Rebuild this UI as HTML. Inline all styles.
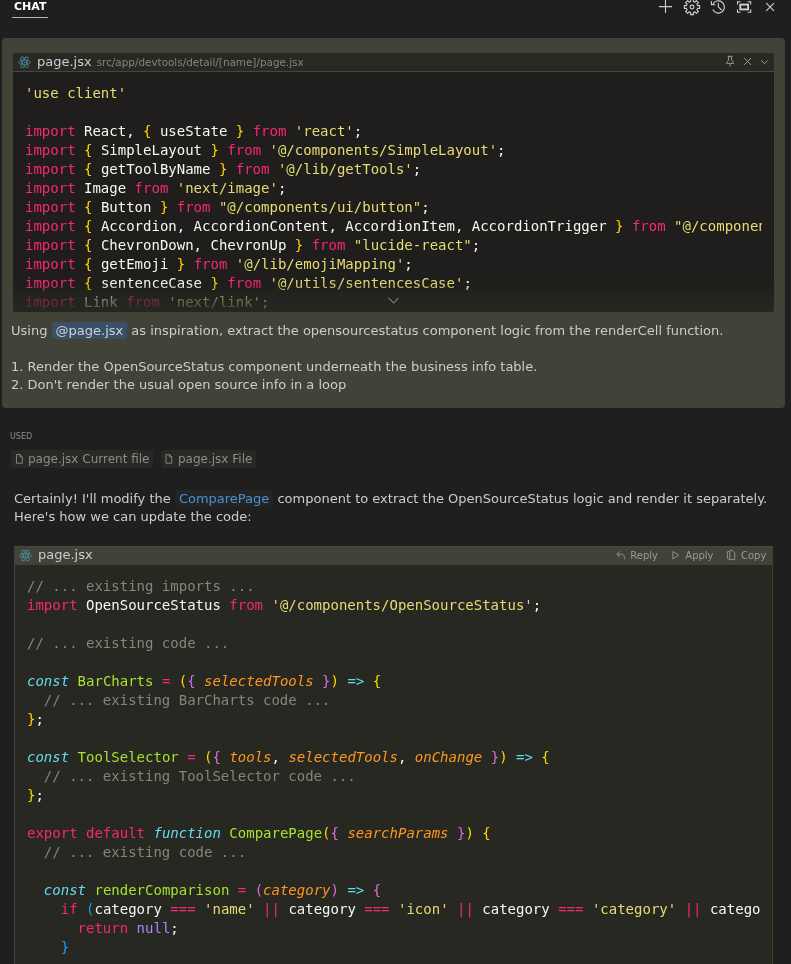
<!DOCTYPE html>
<html><head><meta charset="utf-8">
<style>
html,body{margin:0;padding:0;background:#1f1f1f;}
body{width:791px;height:964px;position:relative;overflow:hidden;font-family:"DejaVu Sans","Liberation Sans",sans-serif;font-size:13px;color:#cccccc;}
.abs{position:absolute;}
.ga{will-change:transform}
.mono{font-family:"DejaVu Sans Mono","Liberation Mono",monospace;font-size:14px;line-height:19px;white-space:pre;}
.k{color:#f92672}.s{color:#e6db74}.w{color:#f8f8f2}.b1{color:#ffd700}.b2{color:#da70d6}.b3{color:#179fff}
.c{color:#87857a}.fn{color:#a6e22e}.kw{color:#66d9ef;font-style:italic}.ar{color:#66d9ef}.p{color:#fd971f;font-style:italic}.n{color:#ae81ff}
.title{left:14px;top:0px;font-size:11px;font-weight:bold;color:#ffffff;line-height:13px;}
.tline{left:12px;top:17px;width:36px;height:1px;background:#b4b4b4;}
.card{left:2px;top:38px;width:783px;height:370px;background:#414339;border-radius:4px;}
.cb1{left:13px;top:53px;width:761px;height:259px;background:#1f1e1c;border-radius:3px;overflow:hidden;}
.cb1h{left:0;top:0;width:761px;height:18px;background:#292924;border-bottom:1px solid #45463f;}
.cb1c{left:0;top:19px;width:749px;height:240px;overflow:hidden;}
.fade{left:0;top:229px;width:761px;height:30px;background:linear-gradient(to bottom,rgba(39,40,34,0) 0%,rgba(39,40,34,.64) 66%,rgba(39,40,34,.85) 100%);}
.cb2{left:14px;top:546px;width:757px;height:430px;background:#272822;border:1px solid #414339;border-top-color:#464643;overflow:hidden;}
.cb2h{left:0;top:0;width:757px;height:18px;background:#414339;}
.cb2c{left:0;top:19px;width:746px;height:420px;overflow:hidden;}
.txt{line-height:18px;white-space:pre;}
.chip{height:18px;top:450px;background:#282825;border-radius:3px;color:#8c8c8c;font-size:12px;line-height:19px;white-space:pre;}
.act{top:1px;line-height:16px;font-size:10px;color:#9a9a90;}
</style></head><body>
<div class="abs ga" style="left:0;top:0;width:791px;height:964px">
<div class="abs title">CHAT</div>
<div class="abs tline"></div>

<div class="abs card"></div>
<div class="abs cb1">
  <div class="abs cb1h"></div>
  <div class="abs" style="left:24px;top:1px;line-height:16px;font-size:13px;color:#cccccc;white-space:pre">page.jsx</div>
  <div class="abs" style="left:83.7px;top:1px;line-height:16px;font-size:10.4px;color:#85857e;white-space:pre">src/app/devtools/detail/[name]/page.jsx</div>
  <div class="abs cb1c"><div class="abs mono" style="left:12px;top:12px;"><span class="s">'use client'</span>

<span class="k">import</span> <span class="w">React, </span><span class="b1">{</span><span class="w"> useState </span><span class="b1">}</span> <span class="k">from</span> <span class="s">'react'</span><span class="w">;</span>
<span class="k">import</span> <span class="b1">{</span><span class="w"> SimpleLayout </span><span class="b1">}</span> <span class="k">from</span> <span class="s">'@/components/SimpleLayout'</span><span class="w">;</span>
<span class="k">import</span> <span class="b1">{</span><span class="w"> getToolByName </span><span class="b1">}</span> <span class="k">from</span> <span class="s">'@/lib/getTools'</span><span class="w">;</span>
<span class="k">import</span> <span class="w">Image</span> <span class="k">from</span> <span class="s">'next/image'</span><span class="w">;</span>
<span class="k">import</span> <span class="b1">{</span><span class="w"> Button </span><span class="b1">}</span> <span class="k">from</span> <span class="s">"@/components/ui/button"</span><span class="w">;</span>
<span class="k">import</span> <span class="b1">{</span><span class="w"> Accordion, AccordionContent, AccordionItem, AccordionTrigger </span><span class="b1">}</span> <span class="k">from</span> <span class="s">"@/components/ui/accordion"</span><span class="w">;</span>
<span class="k">import</span> <span class="b1">{</span><span class="w"> ChevronDown, ChevronUp </span><span class="b1">}</span> <span class="k">from</span> <span class="s">"lucide-react"</span><span class="w">;</span>
<span class="k">import</span> <span class="b1">{</span><span class="w"> getEmoji </span><span class="b1">}</span> <span class="k">from</span> <span class="s">'@/lib/emojiMapping'</span><span class="w">;</span>
<span class="k">import</span> <span class="b1">{</span><span class="w"> sentenceCase </span><span class="b1">}</span> <span class="k">from</span> <span class="s">'@/utils/sentencesCase'</span><span class="w">;</span>
<span class="k">import</span> <span class="w">Link</span> <span class="k">from</span> <span class="s">'next/link'</span><span class="w">;</span></div></div>
  <div class="abs fade"></div>
</div>

<div class="abs txt" style="left:11px;top:322px;">Using <span style="background:#3a5066;color:#c9d3dc;padding:1px 4px;border-radius:3px">@page.jsx</span> as inspiration, extract the opensourcestatus component logic from the renderCell function.

1. Render the OpenSourceStatus component underneath the business info table.
2. Don't render the usual open source info in a loop</div>

<div class="abs" style="left:10px;top:432px;font-size:8px;color:#8b8b8b;line-height:10px;">USED</div>
<div class="abs chip" style="left:11px;width:142px;"><span style="margin-left:17px">page.jsx Current file</span></div>
<div class="abs chip" style="left:161px;width:95px;"><span style="margin-left:17px">page.jsx File</span></div>

<div class="abs txt" style="left:14px;top:490px;line-height:18px;">Certainly! I'll modify the <span style="background:#242424;color:#4a90d6;padding:1px 4px;border-radius:3px">ComparePage</span> component to extract the OpenSourceStatus logic and render it separately.
Here's how we can update the code:</div>

<div class="abs cb2">
  <div class="abs cb2h"></div>
  <div class="abs" style="left:23px;top:0px;line-height:16px;font-size:13px;color:#cccccc">page.jsx</div>
  <div class="abs act" style="left:615.3px;">Reply</div>
  <div class="abs act" style="left:670.3px;">Apply</div>
  <div class="abs act" style="left:726px;">Copy</div>
  <div class="abs cb2c"><div class="abs mono" style="left:12px;top:11px;"><span class="c">// ... existing imports ...</span>
<span class="k">import</span> <span class="w">OpenSourceStatus</span> <span class="k">from</span> <span class="s">'@/components/OpenSourceStatus'</span><span class="w">;</span>

<span class="c">// ... existing code ...</span>

<span class="kw">const</span> <span class="fn">BarCharts</span> <span class="k">=</span> <span class="b1">(</span><span class="b2">{</span> <span class="p">selectedTools</span> <span class="b2">}</span><span class="b1">)</span> <span class="ar">=&gt;</span> <span class="b1">{</span>
<span class="c">  // ... existing BarCharts code ...</span>
<span class="b1">}</span><span class="w">;</span>

<span class="kw">const</span> <span class="fn">ToolSelector</span> <span class="k">=</span> <span class="b1">(</span><span class="b2">{</span> <span class="p">tools</span><span class="w">, </span><span class="p">selectedTools</span><span class="w">, </span><span class="p">onChange</span> <span class="b2">}</span><span class="b1">)</span> <span class="ar">=&gt;</span> <span class="b1">{</span>
<span class="c">  // ... existing ToolSelector code ...</span>
<span class="b1">}</span><span class="w">;</span>

<span class="k">export</span> <span class="k">default</span> <span class="kw">function</span> <span class="fn">ComparePage</span><span class="b1">(</span><span class="b2">{</span> <span class="p">searchParams</span> <span class="b2">}</span><span class="b1">)</span> <span class="b1">{</span>
<span class="c">  // ... existing code ...</span>

  <span class="kw">const</span> <span class="fn">renderComparison</span> <span class="k">=</span> <span class="b2">(</span><span class="p">category</span><span class="b2">)</span> <span class="ar">=&gt;</span> <span class="b2">{</span>
    <span class="k">if</span> <span class="b3">(</span><span class="w">category</span> <span class="k">===</span> <span class="s">'name'</span> <span class="k">||</span> <span class="w">category</span> <span class="k">===</span> <span class="s">'icon'</span> <span class="k">||</span> <span class="w">category</span> <span class="k">===</span> <span class="s">'category'</span> <span class="k">||</span> <span class="w">category</span> <span class="k">===</span> <span class="s">'description'</span><span class="b3">)</span> <span class="b3">{</span>
      <span class="k">return</span> <span class="n">null</span><span class="w">;</span>
    <span class="b3">}</span></div></div>
</div>
<svg class="abs" style="left:0;top:0;pointer-events:none" width="791" height="964" viewBox="0 0 791 964">
<g fill="none" stroke="#cfcfcf" stroke-width="1.1">
<path d="M659 6.6H672M665.5 0V13"/>
<path d="M690.63 1.47 L690.54 -0.66 L693.46 -0.66 L693.37 1.47 L694.94 2.12 L696.38 0.55 L698.45 2.62 L696.88 4.06 L697.53 5.63 L699.66 5.54 L699.66 8.46 L697.53 8.37 L696.88 9.94 L698.45 11.38 L696.38 13.45 L694.94 11.88 L693.37 12.53 L693.46 14.66 L690.54 14.66 L690.63 12.53 L689.06 11.88 L687.62 13.45 L685.55 11.38 L687.12 9.94 L686.47 8.37 L684.34 8.46 L684.34 5.54 L686.47 5.63 L687.12 4.06 L685.55 2.62 L687.62 0.55 L689.06 2.12Z" stroke-linejoin="round"/>
<circle cx="692" cy="7" r="1.9"/>
<path d="M712.77 4.42 A6.10 6.10 0 1 1 712.77 9.58"/>
<path d="M711.4 1V4.8H715.2"/>
<path d="M718.3 3V6.8L721.6 10"/>
<path d="M737.5 4.5V1.7H740.5M747.7 1.7H750.7V4.5M750.7 9.5V12.3H747.7M740.5 12.3H737.5V9.5"/>
<rect x="740.3" y="4.6" width="7.8" height="4.8" stroke-width="1.9"/>
<path d="M766.3 3.1L774 10.9M774 3.1L766.3 10.9"/>
</g>
<g fill="none" stroke="#9b9b93" stroke-width="1">
<path d="M727.7 56.3H732.4M728.6 56.3V60.2L726.6 62.6V63.4H733.6V62.6L731.6 60.2V56.3M730.1 63.4V66.6"/>
<path d="M744.2 58L751 64.8M751 58L744.2 64.8"/>
<path d="M761.2 60.4L764.5 63.7L767.8 60.4"/>
<path d="M388.6 298L393.6 302.9L398.6 298" stroke="#b0b0a8"/>
</g>
<g fill="none" stroke="#519fb5" stroke-width="0.9" opacity="0.75"><ellipse cx="24.5" cy="62.3" rx="5.9" ry="2.2" transform="rotate(0 24.5 62.3)"/><ellipse cx="24.5" cy="62.3" rx="5.9" ry="2.2" transform="rotate(60 24.5 62.3)"/><ellipse cx="24.5" cy="62.3" rx="5.9" ry="2.2" transform="rotate(120 24.5 62.3)"/><circle cx="24.5" cy="62.3" r="0.9" fill="#519fb5" stroke="none"/></g>
<g fill="none" stroke="#519fb5" stroke-width="0.9" opacity="0.75"><ellipse cx="25.5" cy="555.5" rx="5.9" ry="2.2" transform="rotate(0 25.5 555.5)"/><ellipse cx="25.5" cy="555.5" rx="5.9" ry="2.2" transform="rotate(60 25.5 555.5)"/><ellipse cx="25.5" cy="555.5" rx="5.9" ry="2.2" transform="rotate(120 25.5 555.5)"/><circle cx="25.5" cy="555.5" r="0.9" fill="#519fb5" stroke="none"/></g>
<path d="M16.50 454.60 H19.98 L22.30 456.92 V463.20 H16.50 Z M19.98 454.60 V456.92 H22.30" fill="none" stroke="#8c8c8c" stroke-width="0.9" stroke-linejoin="round"/>
<path d="M166.00 454.60 H169.48 L171.80 456.92 V463.20 H166.00 Z M169.48 454.60 V456.92 H171.80" fill="none" stroke="#8c8c8c" stroke-width="0.9" stroke-linejoin="round"/>
<g fill="none" stroke="#8f8f86" stroke-width="1">
<path d="M619.8 551.3L616.9 554.2L619.8 557.1M616.9 554.2H621.2C623.4 554.2 624.4 555.6 624.4 557.3V559.3"/>
<path d="M672.9 551.4V559L678.8 555.2Z" stroke-linejoin="round"/>
<path d="M729.6 551.6H727.4V558.3L729.4 559.7M729.8 550.6H732.5L734.7 552.8V559.6H729.8Z" stroke-linejoin="round"/>
</g>
</svg>
</div>
</body></html>
